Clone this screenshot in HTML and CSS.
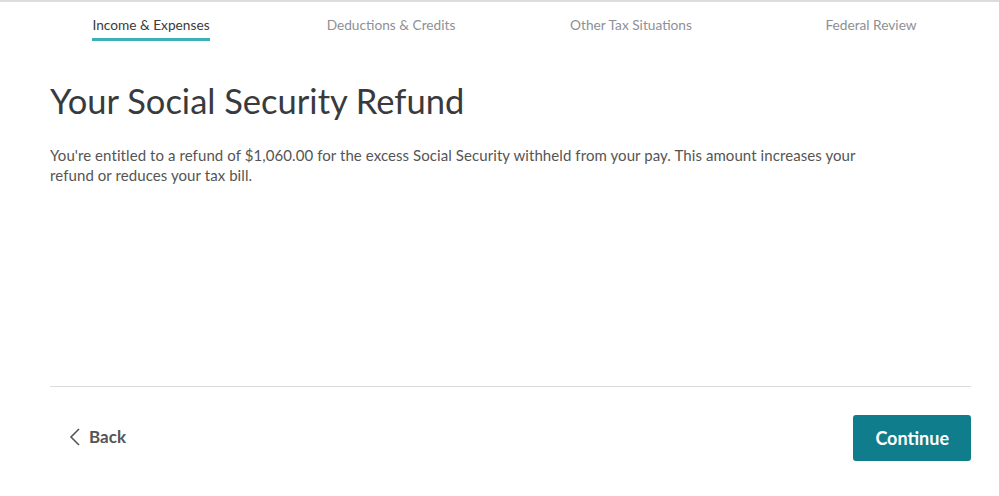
FILE: index.html
```html
<!DOCTYPE html>
<html lang="en">

<head>
    <meta charset="UTF-8">
    <meta name="viewport" content="width=device-width, initial-scale=1.0">
    <title>Your Social Security Refund</title>
    <link rel="stylesheet" href="styles.css">
</head>

<body>
    <nav class="steps">
        <a href="#" class="step active">Income &amp; Expenses</a>
        <a href="#" class="step">Deductions &amp; Credits</a>
        <a href="#" class="step">Other Tax Situations</a>
        <a href="#" class="step">Federal Review</a>
    </nav>
    <main class="content">
        <h1>Your Social Security Refund</h1>
        <p class="intro">You're entitled to a refund of $1,060.00 for the excess Social Security withheld from your pay. This amount increases your refund or reduces your tax bill.</p>
    </main>
    <div class="actions">
        <a href="#" class="back-link">
            <svg width="12" height="18" viewBox="0 0 12 18">
                <path d="M10 1 L2 9 L10 17" fill="none" stroke="#555" stroke-width="1.6"/>
            </svg>
            Back
        </a>
        <a href="#" class="continue-button">Continue</a>
    </div>
</body>

</html>
```
FILE: styles.css
```css
body {
    margin: 0;
    font-family: Lato, "Noto Sans", sans-serif;
    color: #393a3d;
    background-color: white;
    border-top: 2px solid #dcdcdc;
}

.steps {
    display: grid;
    grid-template-columns: repeat(4, 240px);
    padding-left: 31px;
    height: 46px;
}

.step {
    justify-self: center;
    align-self: start;
    margin-top: 14px;
    padding-bottom: 5px;
    font-size: 13.7px;
    color: #8d9096;
    text-decoration: none;
}

.step.active {
    color: #393a3d;
    border-bottom: 3px solid #3ab0b8;
}

.content {
    padding: 33px 28px 0 50px;
    height: 305px;
}

h1 {
    margin: 0 0 24px 0;
    font-size: 34.5px;
    font-weight: 400;
    line-height: 40px;
}

.intro {
    margin: 0;
    max-width: 840px;
    font-size: 15px;
    line-height: 20px;
    letter-spacing: 0.08px;
    color: #555;
}

.actions {
    margin: 0 28px 0 50px;
    border-top: 1px solid #dcdcdc;
    padding-top: 28px;
    display: flex;
    justify-content: space-between;
    align-items: center;
}

.back-link {
    display: flex;
    align-items: center;
    gap: 8px;
    margin: 0 0 3px 19px;
    font-size: 17px;
    font-weight: bold;
    color: #555;
    text-decoration: none;
}

.continue-button {
    display: block;
    padding: 12px 22px;
    line-height: 22px;
    background-color: #0f7d8b;
    color: white;
    font-size: 18px;
    font-weight: bold;
    text-decoration: none;
    border-radius: 3px;
}
```
